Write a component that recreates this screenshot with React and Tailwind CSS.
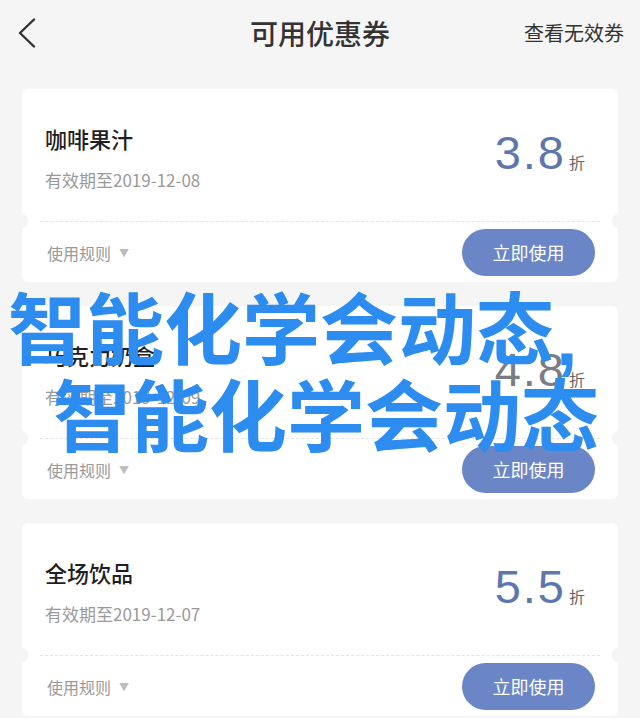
import React from "react";

const cjk = { fontFamily: '"Noto Sans CJK SC", "Noto Sans", sans-serif' };
const num = { fontFamily: '"Liberation Sans", Arial, sans-serif' };

function Coupon({ title, date, value, valueClass }) {
  return (
    <div className="relative mx-[22px] h-[193px] rounded-[6px] bg-white">
      <div className="flex h-[132px] items-start justify-between pl-[23px] pr-[33px]">
        <div className="flex flex-col pt-[34px]">
          <div className="text-[22px] font-medium leading-[30px] text-[#1f1f1f]" style={cjk}>{title}</div>
          <div className="mt-[15px] text-[17px] leading-[24px] text-[#9a9a9a]" style={cjk}>{date}</div>
        </div>
        <div className="flex items-baseline pt-[40px]">
          <span className={`text-[47px] leading-[48px] tracking-[2px] ${valueClass}`} style={num}>{value}</span>
          <span className="ml-[3px] text-[16px] text-[#666]" style={cjk}>折</span>
        </div>
      </div>
      <div className="mx-[18px] border-t border-dashed border-[#e4e4e4]" />
      <div className="absolute left-[-6px] top-[125px] h-[14px] w-[12px] rounded-full bg-[#f5f5f5]" />
      <div className="absolute right-[-6px] top-[125px] h-[14px] w-[12px] rounded-full bg-[#f5f5f5]" />
      <div className="flex items-start justify-between pl-[25px] pr-[23px] pt-[7px]">
        <div className="mt-[10px] flex items-center text-[16px] leading-[28px] text-[#9a9a9a]" style={cjk}>
          <span>使用规则</span>
          <span className="ml-[8px] text-[10px] text-[#bdbdbd]">▼</span>
        </div>
        <button className="flex h-[47px] w-[133px] items-center justify-center rounded-full bg-[#6a86c6] text-[18px] text-white" style={cjk}>
          立即使用
        </button>
      </div>
    </div>
  );
}

export default function App() {
  return (
    <div className="relative h-[718px] w-[640px] overflow-hidden bg-[#f5f5f5]">
      <div className="relative flex h-[66px] items-center justify-center">
        <svg className="absolute left-[17px] top-[18px]" width="20" height="30" viewBox="0 0 20 30" fill="none">
          <path d="M17 1.5 L3 15 L17 28.5" stroke="#333" strokeWidth="2.4" strokeLinecap="round" strokeLinejoin="round" />
        </svg>
        <div className="text-[28px] font-medium text-[#333]" style={cjk}>可用优惠券</div>
        <div className="absolute right-[16px] text-[20px] text-[#333]" style={cjk}>查看无效券</div>
      </div>
      <div className="mt-[23px] flex flex-col gap-[24px]">
        <Coupon title="咖啡果汁" date="有效期至2019-12-08" value="3.8" valueClass="text-[#5d76ad]" />
        <Coupon title="巧克力奶盒" date="有效期至2019-12-09" value="4.8" valueClass="text-[#7a7c86]" />
        <Coupon title="全场饮品" date="有效期至2019-12-07" value="5.5" valueClass="text-[#5d76ad]" />
      </div>
      <div className="absolute left-[8px] top-[285px] font-bold text-[78px] leading-[80px] text-[#2d8cf0]" style={cjk}>
        <div className="whitespace-nowrap">智能化学会动态<span className="relative top-[6px] ml-[2px]" style={num}>,</span></div>
        <div className="whitespace-nowrap pl-[45px]">智能化学会动态</div>
      </div>
    </div>
  );
}
